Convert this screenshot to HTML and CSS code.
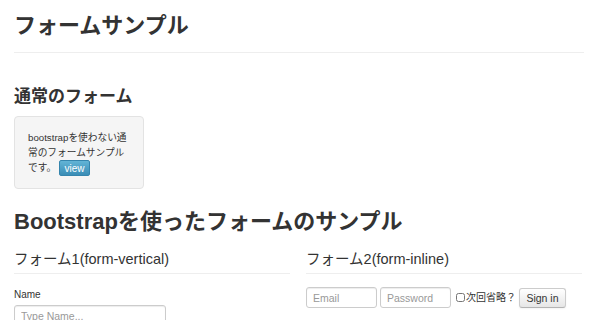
FILE: index.html
```
<!DOCTYPE html>
<html lang="ja">
<head>
    <meta charset="UTF-8">
    <title>フォームサンプル</title>
    <link rel="stylesheet" href="styles.css">
</head>
<body>
    <div class="container">
        <h1 class="page-header">フォームサンプル</h1>

        <h2 class="section-title">通常のフォーム</h2>
        <div class="well">
            bootstrapを使わない通<br>
            常のフォームサンプル<br>
            です。<a class="btn-info" href="#">view</a>
        </div>

        <h1 class="big-title">Bootstrapを使ったフォームのサンプル</h1>

        <div class="row">
            <div class="col">
                <h3 class="col-title">フォーム1(form-vertical)</h3>
                <form class="form-vertical">
                    <label class="field-label">Name</label>
                    <input class="text-input wide" type="text" placeholder="Type Name...">
                </form>
            </div>
            <div class="col">
                <h3 class="col-title">フォーム2(form-inline)</h3>
                <form class="form-inline">
                    <input class="text-input small" type="text" placeholder="Email">
                    <input class="text-input small" type="password" placeholder="Password">
                    <label class="check"><input type="checkbox">次回省略？</label>
                    <button class="btn" type="button">Sign in</button>
                </form>
            </div>
        </div>
    </div>
</body>
</html>
```

FILE: styles.css
```
body {
    margin: 0;
    padding: 0;
    background: #fff;
    color: #333;
    font-family: "Liberation Sans", "Noto Sans CJK JP", sans-serif;
    font-size: 10px;
    line-height: 15px;
}

.container {
    width: 570px;
    padding-left: 14px;
}

.page-header {
    margin: 11px 0 0;
    padding-bottom: 11px;
    font-size: 22px;
    line-height: 30px;
    font-weight: bold;
    border-bottom: 1px solid #eee;
}

.section-title {
    margin: 32px 0 7px;
    font-size: 17px;
    line-height: 24px;
    font-weight: bold;
}

.well {
    width: 102px;
    padding: 13px 13px 12px;
    background: #f5f5f5;
    border: 1px solid #e3e3e3;
    border-radius: 4px;
    white-space: nowrap;
    font-size: 9.7px;
}

.btn-info {
    display: inline-block;
    width: 31px;
    height: 16px;
    margin-left: 3px;
    line-height: 15px;
    font-size: 10px;
    text-align: center;
    color: #fff;
    text-decoration: none;
    background: linear-gradient(#62b4d6, #3a8db6);
    border: 1px solid #3585ad;
    border-radius: 2px;
    box-sizing: border-box;
    vertical-align: middle;
}

.big-title {
    margin: 18px 0 0;
    font-size: 22px;
    line-height: 30px;
    font-weight: bold;
}

.row {
    display: grid;
    grid-template-columns: 276px 276px;
    gap: 16px;
}

.col-title {
    margin: 12px 0 0;
    padding-bottom: 4px;
    font-size: 14.5px;
    line-height: 20px;
    font-weight: normal;
    border-bottom: 1px solid #eee;
}

.form-vertical {
    margin-top: 14px;
}

.field-label {
    display: block;
    font-size: 10px;
    line-height: 14px;
    margin-bottom: 3px;
}

.text-input {
    height: 21px;
    padding: 0 6px;
    font-family: "Liberation Sans", "Noto Sans CJK JP", sans-serif;
    font-size: 10.5px;
    color: #555;
    border: 1px solid #ccc;
    border-radius: 3px;
    box-shadow: inset 0 1px 1px rgba(0,0,0,0.075);
    box-sizing: border-box;
    margin: 0;
}

.text-input::placeholder {
    color: #999;
}

.text-input.wide {
    width: 152px;
}

.text-input.small {
    width: 71px;
}

.form-inline {
    margin-top: 13px;
    display: flex;
    align-items: center;
    gap: 3px;
}

.check {
    display: flex;
    align-items: center;
    font-size: 10px;
}

.check input {
    width: 9px;
    height: 9px;
    margin: 0 1px 0 2px;
}

.btn {
    width: 47px;
    height: 20px;
    margin-left: 0;
    padding: 0;
    font-family: "Liberation Sans", sans-serif;
    font-size: 10.5px;
    color: #333;
    background: linear-gradient(#fff, #e6e6e6);
    border: 1px solid #ccc;
    border-bottom-color: #b3b3b3;
    border-radius: 3px;
    box-shadow: inset 0 1px 0 rgba(255,255,255,0.2), 0 1px 2px rgba(0,0,0,0.05);
}
```
